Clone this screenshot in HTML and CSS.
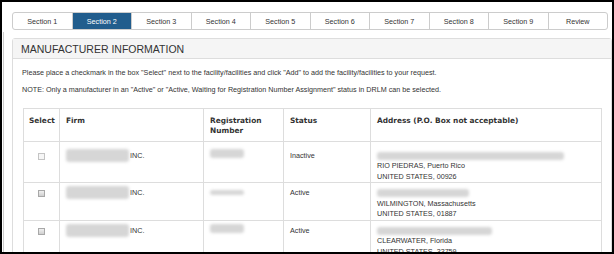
FILE: index.html
```html
<!DOCTYPE html>
<html>
<head>
    <title>Manufacturer Information</title>
    <link rel="stylesheet" href="styles.css">
</head>
<body>
    <div class="frame">
        <ul class="tabs">
            <li>Section 1</li>
            <li class="active">Section 2</li>
            <li>Section 3</li>
            <li>Section 4</li>
            <li>Section 5</li>
            <li>Section 6</li>
            <li>Section 7</li>
            <li>Section 8</li>
            <li>Section 9</li>
            <li>Review</li>
        </ul>

        <div class="main">
            <div class="panel">
                <div class="panel-heading">MANUFACTURER INFORMATION</div>
                <div class="panel-body">
                    <p>Please place a checkmark in the box "Select" next to the facility/facilities and click "Add" to add the facility/facilities to your request.</p>
                    <p>NOTE: Only a manufacturer in an "Active" or "Active, Waiting for Registration Number Assignment" status in DRLM can be selected.</p>

                    <table class="grid">
                        <colgroup>
                            <col class="c-select">
                            <col class="c-firm">
                            <col class="c-reg">
                            <col class="c-status">
                            <col class="c-address">
                        </colgroup>
                        <thead>
                            <tr>
                                <th class="sel">Select</th>
                                <th>Firm</th>
                                <th>Registration Number</th>
                                <th>Status</th>
                                <th>Address (P.O. Box not acceptable)</th>
                            </tr>
                        </thead>
                        <tbody>
                            <tr class="first">
                                <td class="sel"><span class="checkbox light"></span></td>
                                <td><div class="firm"><span class="blur firm-blur"></span>INC.</div></td>
                                <td><span class="blur reg-blur"></span></td>
                                <td>Inactive</td>
                                <td>
                                    <div class="line"><span class="blur" style="width: 187px"></span></div>
                                    <div>RIO PIEDRAS, Puerto Rico</div>
                                    <div>UNITED STATES, 00926</div>
                                </td>
                            </tr>
                            <tr>
                                <td class="sel"><span class="checkbox"></span></td>
                                <td><div class="firm"><span class="blur firm-blur"></span>INC.</div></td>
                                <td><span class="blur reg-blur thin"></span></td>
                                <td>Active</td>
                                <td>
                                    <div class="line"><span class="blur" style="width: 92px"></span></div>
                                    <div>WILMINGTON, Massachusetts</div>
                                    <div>UNITED STATES, 01887</div>
                                </td>
                            </tr>
                            <tr>
                                <td class="sel"><span class="checkbox"></span></td>
                                <td><div class="firm"><span class="blur firm-blur"></span>INC.</div></td>
                                <td><span class="blur reg-blur"></span></td>
                                <td>Active</td>
                                <td>
                                    <div class="line"><span class="blur" style="width: 115px"></span></div>
                                    <div>CLEARWATER, Florida</div>
                                    <div>UNITED STATES, 33759</div>
                                </td>
                            </tr>
                        </tbody>
                    </table>
                </div>
            </div>
        </div>
    </div>
</body>
</html>
```

FILE: styles.css
```css
body {
    margin: 0;
    font-family: "Liberation Sans", Arial, sans-serif;
    color: #333;
    background-color: #ffffff;
}

.frame {
    width: 614px;
    height: 254px;
    box-sizing: border-box;
    border: 2px solid #000;
    padding-top: 10px;
    overflow: hidden;
}

/* section tabs */
.tabs {
    display: flex;
    list-style: none;
    margin: 0 0 0 10px;
    padding: 0;
    width: 596px;
    height: 18px;
    box-sizing: border-box;
    border: 1px solid #ccc;
    border-radius: 3px;
    overflow: hidden;
}

.tabs li {
    flex: 1;
    display: flex;
    align-items: center;
    justify-content: center;
    font-size: 7.2px;
    border-left: 1px solid #ccc;
}

.tabs li:first-child {
    border-left: none;
}

.tabs li.active {
    background-color: #215d8d;
    color: #ffffff;
}

.main {
    margin: 2px 0 0 1px;
    border-left: 1px solid #ccc;
    padding: 6px 0 0 8px;
    height: 300px;
}

/* panel */
.panel {
    border: 1px solid #ddd;
    border-radius: 3px;
}

.panel-heading {
    height: 19px;
    display: flex;
    align-items: center;
    padding-left: 8px;
    background-color: #f5f5f5;
    border-bottom: 1px solid #ddd;
    font-size: 10.5px;
}

.panel-body {
    padding: 9px 10px 0 9px;
}

.panel-body p {
    margin: 0;
    font-size: 7.2px;
    line-height: 9px;
}

.panel-body p + p {
    margin-top: 8px;
}

/* facility table */
.grid {
    margin: 14px 0 0 1px;
    width: 578px;
    table-layout: fixed;
    border-collapse: collapse;
}

.c-select { width: 36px; }
.c-firm { width: 144px; }
.c-reg { width: 80px; }
.c-status { width: 87px; }
.c-address { width: 231px; }

.grid th,
.grid td {
    border: 1px solid #ddd;
    text-align: left;
    vertical-align: top;
}

.grid th {
    font-family: "DejaVu Sans", Verdana, sans-serif;
    font-weight: bold;
    font-size: 7.4px;
    line-height: 10px;
    padding: 7px 6px 5px;
}

.grid th.sel {
    padding-left: 5px;
}

.grid td {
    font-size: 7.2px;
    line-height: 10.5px;
    padding: 5px 6px 0;
}

.grid tr.first td {
    padding-top: 8.5px;
}

.grid td.sel {
    text-align: center;
}

.checkbox {
    display: inline-block;
    width: 7px;
    height: 7px;
    margin-top: 2px;
    box-sizing: border-box;
    border: 1px solid #a8a8a8;
    background: linear-gradient(#f0f0f0, #cfcfcf);
}

.checkbox.light {
    border-color: #c4c4c4;
    background: #f6f6f6;
}

/* redacted values */
.blur {
    display: inline-block;
    height: 8px;
    background-color: #d6d6d6;
    border-radius: 3px;
    filter: blur(1.5px);
}

.line {
    height: 10.5px;
    display: flex;
    align-items: center;
}

.firm {
    display: flex;
    align-items: flex-start;
}

.firm-blur {
    width: 63px;
    height: 13px;
    margin: -2px 1px 0 0;
}

.reg-blur {
    width: 34px;
    height: 9px;
    margin-top: -2px;
}

.reg-blur.thin {
    height: 5px;
    margin-top: 2px;
}
```
